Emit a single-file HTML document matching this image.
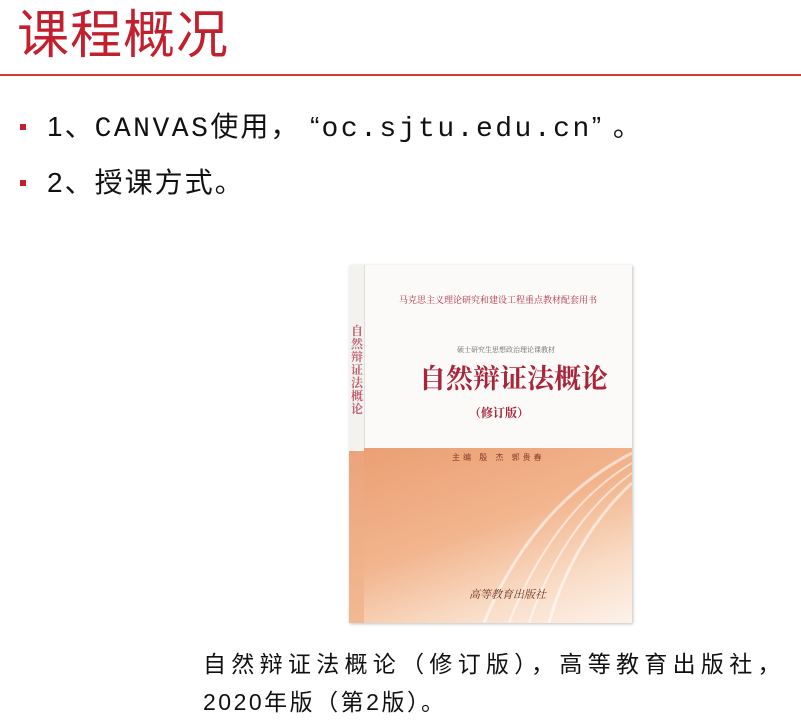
<!DOCTYPE html>
<html><head><meta charset="utf-8"><style>
body{margin:0;width:801px;height:723px;background:#fff;position:relative;overflow:hidden;font-family:"Liberation Sans","Noto Sans CJK SC",sans-serif;}
.t{position:absolute;left:17px;top:2px;font-size:52px;color:#c3202f;line-height:68px;letter-spacing:1px;}
.rule{position:absolute;left:0;top:74px;width:801px;height:2px;background:#d23a3a;}
.b{position:absolute;width:6px;height:6px;background:#c3202f;left:20px;}
.l{position:absolute;left:47px;font-size:28px;color:#111;white-space:nowrap;line-height:34px;letter-spacing:2px;}
.m{font-family:"Liberation Mono",monospace;letter-spacing:2.5px;}
.book{position:absolute;left:349px;top:265px;width:283px;height:358px;background:#fbfaf8;box-shadow:1px 1px 3px rgba(0,0,0,.25);overflow:hidden;}
.spine{position:absolute;left:0;top:0;width:15px;height:100%;background:linear-gradient(#f4f2ef 0,#f4f2ef 52%,#eca47c 52%,#f1b992 100%);border-right:1px solid #ddd;}
.low{position:absolute;left:15px;top:183px;right:0;bottom:0;background:linear-gradient(160deg,#eb9f73 0%,#f2b58e 45%,#f9dcc6 75%,#fdf2ea 100%);}
.serif{font-family:"Liberation Serif","Noto Serif CJK SC",serif;}
.cap{position:absolute;left:203px;font-size:23px;color:#111;letter-spacing:5.3px;white-space:nowrap;}
</style></head><body>
<div class="t">课程概况</div>
<div class="rule"></div>
<div class="b" style="top:124px"></div>
<div class="l" style="top:110px">1、<span class="m">CANVAS</span>使用，&nbsp;“<span class="m">oc.sjtu.edu.cn</span>”&nbsp;。</div>
<div class="b" style="top:180px"></div>
<div class="l" style="top:166px">2、授课方式。</div>
<div class="book">
 <div class="spine"></div>
 <div style="position:absolute;left:2px;top:60px;width:12px;font-size:12px;line-height:13px;color:#c06070;font-weight:bold" class="serif">自然辩证法概论</div>
 <div class="low">
  <svg width="268" height="175" style="position:absolute;left:0;top:0">
   <g fill="none" stroke="#fff" stroke-opacity=".55">
    <path d="M268 5 C200 40 150 100 120 175" stroke-width="3"/>
    <path d="M268 15 C210 50 170 110 145 175" stroke-width="2"/>
    <path d="M268 25 C220 60 185 115 165 175" stroke-width="2"/>
    <path d="M268 35 C230 70 200 120 185 175" stroke-width="3"/>
   </g>
  </svg>
  <div style="position:absolute;left:88px;top:4px;font-size:8px;color:#8a3a2a;letter-spacing:3px">主编 殷 杰 郭贵春</div>
  <div style="position:absolute;left:105px;top:138px;font-size:11px;color:#6a3020;font-style:italic" class="serif">高等教育出版社</div>
 </div>
 <div class="serif" style="position:absolute;left:50px;top:28px;font-size:9px;color:#b03040;white-space:nowrap">马克思主义理论研究和建设工程重点教材配套用书</div>
 <div class="serif" style="position:absolute;left:108px;top:80px;font-size:7px;color:#666;white-space:nowrap">硕士研究生思想政治理论课教材</div>
 <div class="serif" style="position:absolute;left:70px;top:92px;font-size:27px;color:#a8243a;font-weight:bold;white-space:nowrap">自然辩证法概论</div>
 <div class="serif" style="position:absolute;left:120px;top:139px;font-size:12px;color:#a8243a;font-weight:bold;white-space:nowrap">（修订版）</div>
</div>
<div class="cap" style="top:645px">自然辩证法概论（修订版），高等教育出版社，</div>
<div class="cap" style="top:683px;letter-spacing:2.5px">2020年版（第2版）。</div>
</body></html>
